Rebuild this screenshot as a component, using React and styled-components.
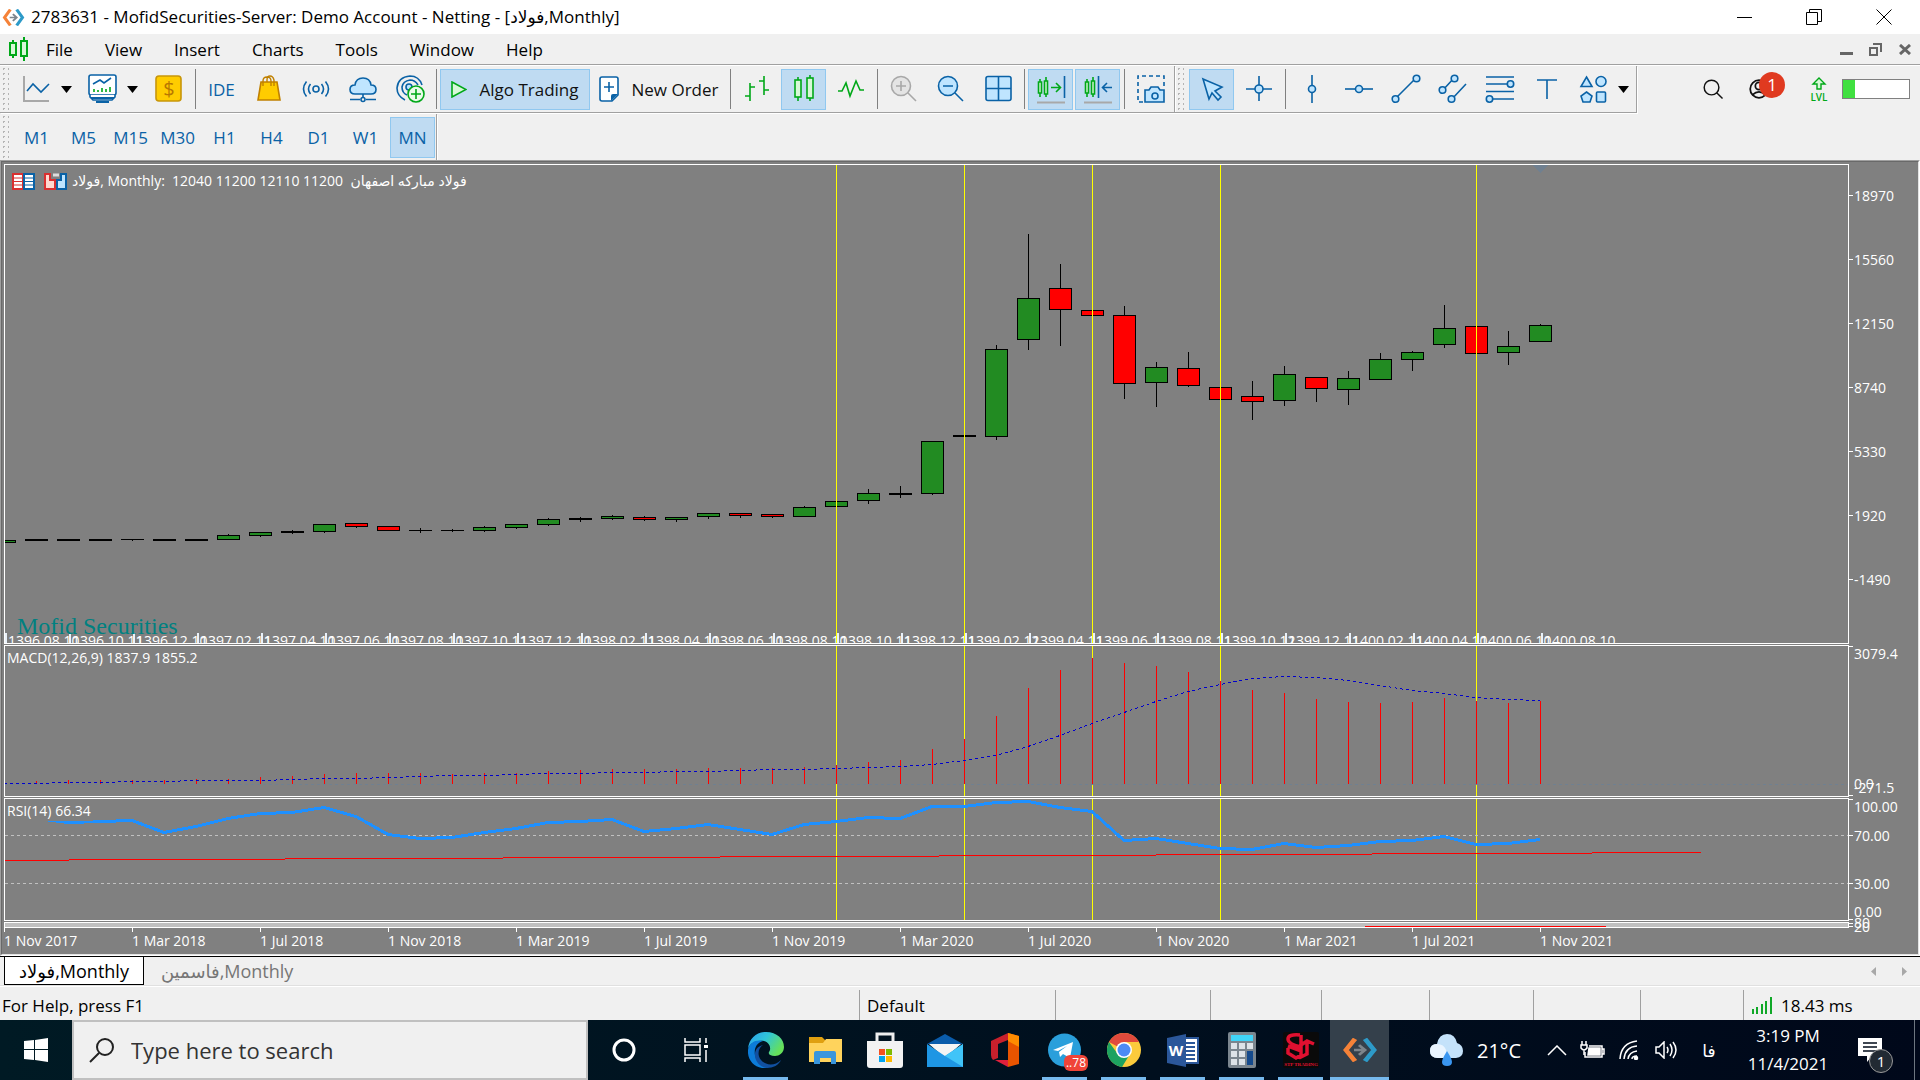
import React, { useState } from 'react';
import styled, { createGlobalStyle, css } from 'styled-components';

const GlobalStyle = createGlobalStyle`
  * {
    box-sizing: border-box;
  }

  body {
    margin: 0;
    background: #f0f0f0;
    color: #000;
    font-family: 'Open Sans', 'Noto Sans', 'DejaVu Sans', sans-serif;
    font-size: 17px;
  }

  button,
  input {
    font: inherit;
    color: inherit;
  }

  svg {
    display: block;
    flex: none;
  }
`;

const BLUE = '#0a62a6';
const SKY = '#bfe5ff';
const GREEN = '#00a818';

/* ---------- shared ---------- */

const PlainButton = styled.button`
  display: flex;
  align-items: center;
  justify-content: center;
  padding: 0;
  border: none;
  background: none;
  white-space: nowrap;
  cursor: pointer;
`;

const Window = styled.div`
  display: flex;
  flex-direction: column;
  min-height: 100vh;
`;

/* ---------- title bar and menu ---------- */

const TitleBar = styled.header`
  display: flex;
  align-items: center;
  height: 34px;
  padding: 0 1px 0 2px;
  background: #fff;
`;

const Title = styled.h1`
  flex: 1;
  margin: 0 0 0 6px;
  font-size: 17px;
  font-weight: 400;
  line-height: 34px;
  white-space: nowrap;
`;

const WindowButton = styled(PlainButton)`
  width: 70px;
  height: 34px;

  &:hover {
    background: #e5e5e5;
  }
`;

const MenuBar = styled.nav`
  display: flex;
  align-items: center;
  height: 31px;
  padding: 0 1px 0 8px;
  border-bottom: 1px solid #a0a0a0;
  box-shadow: 0 1px 0 #fff;
`;

const MenuButton = styled(PlainButton)`
  height: 28px;
  padding: 0 16px;

  &:hover {
    background: #bfdbf2;
  }
`;

const Spacer = styled.div`
  flex: 1;
`;

const MdiButton = styled(PlainButton)`
  width: 29px;
  height: 28px;
`;

/* ---------- toolbars ---------- */

const ToolArea = styled.div`
  display: flex;
  align-items: flex-start;
  margin-top: 1px;
`;

const Toolbar = styled.div`
  display: flex;
  align-items: center;
  height: ${({ $last }) => ($last ? 46 : 47)}px;
  border-right: 1px solid #a0a0a0;
  border-bottom: ${({ $last }) => ($last ? 'none' : '1px solid #a0a0a0')};
  box-shadow: 1px 1px 0 #fff;
`;

const Gripper = styled.div`
  width: 13px;
  height: 46px;
  background-image: radial-gradient(circle, #b4b4b4 1px, transparent 1px);
  background-size: 5px 5px;
  background-position: 1px 0;
  background-clip: content-box;
  padding-right: 4px;
`;

const ToolButton = styled(PlainButton)`
  width: 45px;
  height: 41px;
  margin: 0 1px;
  color: ${BLUE};
  border: 1px solid transparent;

  ${({ $active }) =>
    $active &&
    css`
      background: #bfdbf2;
      border-color: #90c8f0;
    `}

  &:hover {
    border-color: #90c8f0;
  }
`;

const AlgoButton = styled(ToolButton)`
  width: 150px;
  gap: 12px;
  color: #111;
`;

const OrderButton = styled(ToolButton)`
  width: 134px;
  gap: 12px;
  color: #111;
`;

const DropButton = styled(PlainButton)`
  justify-content: flex-start;
  width: 19px;
  height: 41px;
  padding-left: 1px;
`;

const Separator = styled.div`
  width: 2px;
  height: 40px;
  margin: 0 2px;
  border-right: 1px solid #808080;
`;

const StatusTools = styled.div`
  display: flex;
  align-items: center;
  height: 46px;
  padding-right: 10px;
`;

const IconButton = styled(PlainButton)`
  width: 46px;
  height: 41px;
`;

const Badge = styled.span`
  position: absolute;
  top: 3px;
  right: -3px;
  width: 26px;
  height: 26px;
  border-radius: 50%;
  background: #e03a20;
  color: #fff;
  font-size: 17px;
  line-height: 25px;
  text-align: center;
`;

const AccountButton = styled(IconButton)`
  position: relative;
`;

const LevelMark = styled.div`
  display: flex;
  justify-content: center;
  width: 46px;
  margin-left: 14px;
`;

const Level = styled.div`
  width: 68px;
  height: 20px;
  padding-right: 54px;
  border: 1px solid #808080;
  background: #40e040;
  box-shadow: inset -54px 0 0 #fff;
`;

/* ---------- chart window ---------- */

const Sunken = styled.main`
  flex: 1;
  display: flex;
  border: 1px solid;
  border-color: #a0a0a0 #fff #fff #a0a0a0;
`;

const ChartWindow = styled.div`
  flex: 1;
  min-width: 0;
  padding: 2px 0 0 2px;
  border: 1px solid;
  border-color: #696969 #e3e3e3 #e3e3e3 #696969;
  background: #808080;
  color: #fff;
  font-size: 14px;
`;

const Pane = styled.section`
  display: grid;
  grid-template-columns: minmax(0, 1fr) 69px;
  grid-template-rows: minmax(0, 1fr);
  height: ${({ $height }) => $height}px;
  margin-bottom: ${({ $gap }) => $gap || 0}px;
`;

const PlotFrame = styled.div`
  position: relative;
  min-width: 0;
  overflow: hidden;
  border: 1px solid #fff;
  background: ${({ $fill }) => $fill || 'transparent'};
`;

const Canvas = styled.svg`
  width: 100%;
  height: 100%;
  shape-rendering: crispEdges;

  text {
    fill: #fff;
    font-size: 14px;
  }
`;

const AxisCanvas = styled(Canvas)`
  overflow: visible;
`;

const PaneCaption = styled.div`
  position: absolute;
  top: 2px;
  left: 0;
  padding: 0 2px;
  background: #808080;
  line-height: 20px;
  font-size: 14px;
  white-space: pre;
`;

const ChartHeader = styled(PaneCaption)`
  top: 6px;
  left: 7px;
  padding: 0;
  display: flex;
  align-items: center;
  gap: 9px;
`;

const HeaderText = styled.span`
  margin-left: -4px;
`;

const Watermark = styled.div`
  position: absolute;
  left: 12px;
  bottom: 3px;
  color: #008080;
  font-family: 'Liberation Serif', serif;
  font-size: 24px;
  line-height: 28px;
`;

const TimeAxis = styled.ol`
  display: flex;
  height: 26px;
  margin: 0;
  padding: 0;
  list-style: none;
  overflow: hidden;
`;

const TimeLabel = styled.li`
  flex: none;
  width: 128px;
  white-space: nowrap;
  line-height: 18px;
  font-size: 14px;

  &::before {
    content: '';
    display: block;
    width: 1px;
    height: 4px;
    background: #fff;
  }
`;

/* ---------- tabs and status bar ---------- */

const TabBar = styled.div`
  display: flex;
  align-items: flex-start;
  height: 30px;
  padding-left: 4px;
  border-top: 1px solid #000;
  border-bottom: 1px solid #e0e0e0;
  box-shadow: 0 1px 0 #fff;
`;

const Tab = styled(PlainButton)`
  height: 28px;
  padding: 0 17px;
  color: ${({ $active }) => ($active ? '#000' : '#767676')};
  font-size: 18px;

  ${({ $active }) =>
    $active &&
    css`
      padding: 0 14px;
      background: #fff;
      border: 1px solid #000;
      border-top: none;
    `}
`;

const TabScroll = styled(PlainButton)`
  width: 31px;
  height: 28px;
`;

const StatusBar = styled.footer`
  display: flex;
  align-items: stretch;
  height: 34px;
  padding-top: 4px;
`;

const StatusCell = styled.div`
  display: flex;
  align-items: center;
  gap: 8px;
  width: ${({ $width }) => $width}px;
  padding: 0 5px 0 7px;
  border-left: 1px solid #a0a0a0;
  white-space: nowrap;
`;

const StatusMain = styled(StatusCell)`
  flex: 1;
  padding-left: 2px;
  border-left: none;
`;

/* ---------- taskbar ---------- */

const TaskBar = styled.div`
  display: flex;
  height: 60px;
  background: linear-gradient(90deg, #001a24, #000f1e 60%, #00081a);
  color: #fff;
`;

const StartButton = styled(PlainButton)`
  width: 72px;
`;

const SearchBox = styled.label`
  display: flex;
  align-items: center;
  gap: 15px;
  width: 516px;
  padding-left: 15px;
  border: 2px solid #c0c0c0;
  background: #f0f0f0;
  color: #222;
`;

const SearchInput = styled.input`
  flex: 1;
  min-width: 0;
  border: none;
  outline: none;
  background: transparent;
  font-size: 22px;

  &::placeholder {
    color: #333;
    opacity: 1;
  }
`;

const TaskIcon = styled(PlainButton)`
  width: ${({ $width }) => $width}px;
  height: 60px;
`;

const AppList = styled.div`
  display: flex;
  flex: 1;
  margin-left: 4px;
`;

const AppButton = styled(PlainButton)`
  position: relative;
  width: ${({ $running }) => ($running ? 59 : 60)}px;
  height: 60px;
  background: ${({ $active }) => ($active ? '#34404b' : 'none')};

  &::after {
    content: '';
    position: absolute;
    bottom: 0;
    left: ${({ $active }) => ($active ? 0 : 7)}px;
    right: ${({ $active }) => ($active ? 0 : 7)}px;
    height: 3px;
    background: ${({ $running }) => ($running ? '#76b9ed' : 'transparent')};
  }
`;

const CountBadge = styled.span`
  position: absolute;
  right: 6px;
  bottom: 9px;
  padding: 0 2px;
  border-radius: 6px;
  background: #f04438;
  font-size: 12px;
  line-height: 16px;
`;

const Weather = styled(PlainButton)`
  width: 120px;
  gap: 14px;
  justify-content: flex-start;
  padding-left: 10px;
  font-size: 20px;
`;

const Clock = styled.div`
  display: flex;
  flex-direction: column;
  justify-content: center;
  width: 108px;
  text-align: center;
  font-size: 17px;
  line-height: 28px;
`;

const NoticeButton = styled(TaskIcon)`
  position: relative;
  padding-right: 16px;
`;

const NoticeCount = styled.span`
  position: absolute;
  left: 27px;
  top: 29px;
  width: 24px;
  height: 24px;
  border: 1px solid #999;
  border-radius: 50%;
  background: #222a33;
  font-size: 15px;
  line-height: 22px;
`;

const ShowDesktop = styled(PlainButton)`
  width: 6px;
  border-left: 1px solid #6d7680;
`;

/* ---------- toolbar icons ---------- */

const Icon = ({ children, size = 30, ...rest }) => (
  <svg width={size} height={size} viewBox="0 0 30 30" fill="none" stroke={BLUE} strokeWidth="1.6" aria-hidden="true" {...rest}>
    {children}
  </svg>
);

const Caret = () => (
  <svg width="11" height="7" viewBox="0 0 11 7" aria-hidden="true">
    <path d="M0 0h11L5.5 7z" fill="#000" />
  </svg>
);

const icons = {
  lineStudy: (
    <Icon>
      <path d="M2 2v25h25" stroke="#a8a8a8" strokeWidth="2" />
      <path d="M5 17l6-7 8 8 8-8" />
    </Icon>
  ),
  monitor: (
    <Icon>
      <rect x="1" y="1" width="27" height="20" rx="2" fill="#fff" />
      <path d="M2 21v2l3 3h19l3-3v-2" fill="#fff" />
      <path d="M3 24h23M8 28h13" strokeWidth="2" />
      <path d="M5 10l7-4 4 3 7-5" />
      <path d="M6 18v-3M10 18v-2M14 18v-4M18 18v-3M22 18v-5" stroke={GREEN} />
    </Icon>
  ),
  dollar: (
    <Icon>
      <rect x="2" y="2" width="25" height="25" rx="3" fill="#fc0" stroke="#c8960a" />
      <text x="15" y="22" textAnchor="middle" fontSize="20" fill="#b87800" stroke="none">$</text>
    </Icon>
  ),
  bag: (
    <Icon stroke="#c08000">
      <path d="M7 8h16l3 18H4z" fill="#fc0" />
      <path d="M9 12V7q0-4 4-4t4 4v5M13 8V6q0-4 3-4t4 4v6" strokeWidth="1.4" />
    </Icon>
  ),
  signal: (
    <Icon>
      <circle cx="15" cy="15" r="3" />
      <path d="M9.5 10q-4 5 0 10M20.5 10q4 5 0 10M5.5 7.5q-6 7.5 0 15M24.5 7.5q6 7.5 0 15" />
    </Icon>
  ),
  cloud: (
    <Icon>
      <path d="M7 20q-5 0-5-4.5T7 11q1-7 8-7t8 7q5 0 5 4.5T23 20z" fill={SKY} />
      <path d="M15 20v4M2 25.5h10M18 25.5h10" />
      <circle cx="15" cy="25.5" r="2" />
    </Icon>
  ),
  vps: (
    <Icon>
      <path d="M10 26Q2 22 2 14 3 3 15 2q9 0 12 9M12 21q-5-2-5-8 1-6 8-7 5 0 8 5" />
      <circle cx="14" cy="13" r="3" fill={SKY} />
      <circle cx="21" cy="20" r="8" fill="#eafbea" stroke={GREEN} />
      <path d="M21 15v10M16 20h10" stroke={GREEN} />
    </Icon>
  ),
  bars: (
    <Icon stroke={GREEN}>
      <path d="M8 9v18M3 22h5M8 13h5M22 2v19M17 7h5M22 16h5" />
    </Icon>
  ),
  candles: (
    <Icon stroke={GREEN}>
      <path d="M9 3v24M21 1v26" />
      <rect x="6" y="6" width="6" height="17" fill="#d8f8d8" />
      <rect x="18" y="4" width="6" height="20" fill="#d8f8d8" />
    </Icon>
  ),
  zigzag: (
    <Icon stroke={GREEN}>
      <path d="M2 17h4l4-8 4 13 6-15 4 9h4" />
    </Icon>
  ),
  zoomIn: (
    <Icon stroke="#a8a8a8">
      <circle cx="12" cy="12" r="9.5" fill="#e4e4e4" />
      <path d="M12 7v10M7 12h10M19 19l8 8" />
    </Icon>
  ),
  zoomOut: (
    <Icon>
      <circle cx="12" cy="12" r="9.5" fill={SKY} />
      <path d="M7 12h10M19 19l8 8" />
    </Icon>
  ),
  tile: (
    <Icon>
      <rect x="3" y="2.5" width="25" height="24" rx="2" fill={SKY} />
      <path d="M3 14.5h25M15.5 2.5v24" />
    </Icon>
  ),
  autoScroll: (
    <Icon>
      <path d="M4 5v18M10 3v20" stroke={GREEN} />
      <path d="M2.5 8h3v11h-3zM8.5 7h3v13h-3z" stroke={GREEN} fill="#d8f8d8" />
      <path d="M15 13.5h9M20 9l4.5 4.5L20 18" stroke={GREEN} />
      <path d="M28.5 2v22" />
      <path d="M1 28.5h28" stroke="#a8a8a8" strokeWidth="2" />
    </Icon>
  ),
  shift: (
    <Icon>
      <path d="M4 5v18M10 3v20" stroke={GREEN} />
      <path d="M2.5 8h3v11h-3zM8.5 7h3v13h-3z" stroke={GREEN} fill="#d8f8d8" />
      <path d="M29 13.5h-9M24 9l-4.5 4.5L24 18" />
      <path d="M15.5 2v22" />
      <path d="M1 28.5h28" stroke="#a8a8a8" strokeWidth="2" />
    </Icon>
  ),
  camera: (
    <Icon>
      <path d="M7 28H2V2h26v13" strokeDasharray="4 3" />
      <path d="M9 16h4l2-3h7l2 3h4v12H9z" fill={SKY} />
      <circle cx="19" cy="22" r="3" />
    </Icon>
  ),
  cursor: (
    <Icon>
      <path d="M6 5l19 8-7 4 6 6-3 3-6-7-3 6z" fill={SKY} />
    </Icon>
  ),
  cross: (
    <Icon>
      <path d="M15 2v25M2 15h26" />
      <circle cx="15" cy="15" r="4" fill={SKY} />
    </Icon>
  ),
  vline: (
    <Icon>
      <path d="M15 1v28" />
      <circle cx="15" cy="15" r="3.5" fill={SKY} />
    </Icon>
  ),
  hline: (
    <Icon>
      <path d="M1 15h28" />
      <circle cx="15" cy="15" r="3.5" fill={SKY} />
    </Icon>
  ),
  trend: (
    <Icon>
      <path d="M4 25L25 4" />
      <circle cx="4.5" cy="25" r="3.3" fill={SKY} />
      <circle cx="25.5" cy="4.5" r="3.3" fill={SKY} />
    </Icon>
  ),
  channel: (
    <Icon>
      <path d="M5 16L16 4M14 25l14-15" />
      <circle cx="4.5" cy="16" r="3.3" fill={SKY} />
      <circle cx="16.5" cy="4.5" r="3.3" fill={SKY} />
      <circle cx="13.5" cy="25" r="3.3" fill={SKY} />
    </Icon>
  ),
  fibo: (
    <Icon>
      <path d="M1 3h28M1 10h22M1 17.5h28M6 25h23" />
      <circle cx="25.5" cy="10" r="3.2" fill={SKY} />
      <circle cx="4.5" cy="25" r="3.2" fill={SKY} />
    </Icon>
  ),
  text: (
    <Icon>
      <path d="M5 6h20M15 6v19" />
    </Icon>
  ),
  shapes: (
    <Icon fill={SKY}>
      <path d="M7.5 3l5.5 9.5H2zM7.5 18l5.5 4-2 6H4l-2-6z" />
      <circle cx="22" cy="7.5" r="5" />
      <rect x="17.5" y="18" width="9" height="10" rx="1" />
    </Icon>
  ),
};

const TIMEFRAMES = ['M1', 'M5', 'M15', 'M30', 'H1', 'H4', 'D1', 'W1', 'MN'];

/* ---------- chart data ---------- */

const STEP = 32;
const xAt = (i) => i * STEP - 1;

// open/close edges then high/low, in pane pixels; color: g, r or k (flat)
const CANDLES = [
  [375, 377, 375, 377, 'g'], [374, 375, 374, 375, 'k'], [374, 375, 374, 375, 'k'], [374, 375, 374, 375, 'k'],
  [374, 374, 374, 375, 'k'], [374, 375, 374, 375, 'k'], [374, 375, 374, 375, 'k'], [370, 374, 369, 374, 'g'],
  [367, 370, 367, 371, 'g'], [366, 367, 365, 368, 'k'], [359, 366, 359, 367, 'g'], [358, 361, 358, 362, 'r'],
  [361, 365, 361, 365, 'r'], [365, 365, 363, 367, 'k'], [365, 365, 364, 366, 'k'], [362, 365, 361, 366, 'g'],
  [359, 362, 359, 363, 'g'], [354, 359, 353, 360, 'g'], [353, 354, 352, 356, 'k'], [351, 353, 350, 354, 'g'],
  [352, 354, 351, 355, 'r'], [352, 354, 352, 356, 'g'], [348, 351, 348, 353, 'g'], [348, 350, 348, 352, 'r'],
  [349, 351, 349, 352, 'r'], [342, 351, 341, 351, 'g'], [336, 341, 336, 341, 'g'], [328, 335, 324, 338, 'g'],
  [328, 329, 321, 332, 'k'], [276, 328, 276, 329, 'g'], [270, 271, 270, 271, 'k'], [184, 271, 180, 274, 'g'],
  [133, 174, 69, 184, 'g'], [123, 144, 99, 180, 'r'], [145, 150, 145, 150, 'r'], [150, 218, 141, 233, 'r'],
  [202, 217, 197, 241, 'g'], [203, 220, 187, 221, 'r'], [222, 234, 222, 234, 'r'], [231, 236, 216, 254, 'r'],
  [209, 235, 201, 240, 'g'], [212, 223, 212, 236, 'r'], [213, 224, 206, 239, 'g'], [194, 214, 188, 214, 'g'],
  [187, 194, 186, 205, 'g'], [163, 179, 140, 182, 'g'], [161, 188, 161, 188, 'r'], [181, 187, 166, 199, 'g'],
  [160, 176, 159, 176, 'g'],
];

const FILLS = { g: '#228b22', r: '#f00', k: '#000' };

const VERTICALS = [26, 30, 34, 38, 46];

const JALALI = [
  '1396.08.10', '1396.10.11', '1396.12.10', '1397.02.11', '1397.04.10', '1397.06.10', '1397.08.10', '1397.10.11',
  '1397.12.10', '1398.02.11', '1398.04.10', '1398.06.10', '1398.08.10', '1398.10.11', '1398.12.11', '1399.02.12',
  '1399.04.11', '1399.06.11', '1399.08.11', '1399.10.12', '1399.12.11', '1400.02.11', '1400.04.10', '1400.06.10',
  '1400.08.10',
];

const MACD_TOP = 646;
const MACD_BARS = [
  783, 781, 780, 780, 780, 780, 779, 779, 777, 776, 774, 773, 773, 773, 774, 773, 773, 771, 770, 769, 769, 769, 768,
  768, 768, 767, 765, 762, 760, 749, 739, 716, 688, 670, 658, 663, 666, 672, 681, 690, 693, 699, 702, 703, 702, 698,
  701, 703, 701,
];
const MACD_SIGNAL = [
  783, 783, 782, 782, 781, 781, 780, 780, 780, 779, 778, 778, 777, 776, 775, 775, 774, 773, 773, 772, 772, 771, 771,
  770, 769, 769, 768, 767, 766, 764, 760, 755, 746, 735, 723, 712, 701, 691, 684, 678, 676, 677, 680, 685, 690, 693,
  697, 699, 700,
];

const RSI_TOP = 799;
const RSI = [
  816, 818, 822, 821, 820, 832, 826, 818, 813, 812, 807, 816, 834, 838, 837, 832, 828, 822, 821, 819, 831, 828, 824,
  829, 834, 824, 821, 817, 818, 806, 806, 802, 801, 807, 811, 840, 838, 843, 848, 849, 843, 847, 845, 841, 840, 836,
  844, 843, 839,
];

const DATES = [
  '1 Nov 2017', '1 Mar 2018', '1 Jul 2018', '1 Nov 2018', '1 Mar 2019', '1 Jul 2019', '1 Nov 2019', '1 Mar 2020',
  '1 Jul 2020', '1 Nov 2020', '1 Mar 2021', '1 Jul 2021', '1 Nov 2021',
];

// half a pixel down keeps one-pixel strokes on a single row
const toPoints = (values, top) => values.map((v, i) => `${xAt(i)},${v - top + 0.5}`).join(' ');

const Verticals = () =>
  VERTICALS.map((i) => <rect key={i} x={xAt(i)} y="0" width="1" height="100%" fill="#ff0" />);

const Axis = ({ labels, ticks }) => (
  <AxisCanvas>
    {ticks.map((y) => (
      <rect key={y} x="0" y={y} width="4" height="1" fill="#fff" />
    ))}
    {labels.map(([label, y]) => (
      <text key={label} x="5" y={y}>{label}</text>
    ))}
  </AxisCanvas>
);

const PricePlot = () => (
  <Canvas>
    {CANDLES.map(([top, bottom, high, low, color], i) => (
      <g key={i}>
        <rect x={xAt(i)} y={high} width="1" height={low - high + 1} fill="#000" />
        <rect x={xAt(i) - 11} y={top} width="23" height={bottom - top + 1} fill="#000" />
        {color !== 'k' && (
          <rect x={xAt(i) - 10} y={top + 1} width="21" height={bottom - top - 1} fill={FILLS[color]} />
        )}
      </g>
    ))}
    {JALALI.map((label, i) => (
      <g key={label}>
        <rect x={i * 64} y="468" width="2" height="10" fill="#eaf2fa" />
        <text x={i * 64 + 3} y="481">{label}</text>
      </g>
    ))}
    <Verticals />
    <path d="M1527 0h16l-8 8z" fill="#708090" />
  </Canvas>
);

const MacdPlot = () => (
  <Canvas>
    <Verticals />
    <path d="M0 138.5H1843" stroke="#708090" strokeDasharray="3 3" />
    {MACD_BARS.map((y, i) => (
      <rect key={i} x={xAt(i)} y={y - MACD_TOP} width="1" height={784 - y} fill="#f00" />
    ))}
    <polyline points={toPoints(MACD_SIGNAL, MACD_TOP)} fill="none" stroke="#0000cd" strokeDasharray="3 3" />
  </Canvas>
);

const RsiPlot = () => (
  <Canvas>
    <Verticals />
    <path d="M0 36.5H1843M0 84.5H1843" stroke="#c0c0c0" strokeDasharray="3 3" />
    <polyline points={toPoints(RSI, RSI_TOP)} fill="none" stroke="#1e90ff" strokeWidth="3" />
    <path d="M0 61.3L1696 53.5" stroke="#f00" />
  </Canvas>
);

const Chart = () => (
  <ChartWindow>
    <Pane $height={480} $gap={1}>
      <PlotFrame>
        <PricePlot />
        <ChartHeader>
          <svg width="23" height="17" viewBox="0 0 23 17" aria-hidden="true">
            <rect x="1" y="1" width="10" height="15" fill="#fff" stroke="#d83030" strokeWidth="2" />
            <rect x="12" y="1" width="10" height="15" fill="#fff" stroke={BLUE} strokeWidth="2" />
            <path d="M2 5h8M2 8.5h8M2 12h8" stroke="#d83030" />
            <path d="M13 5h8M13 8.5h8M13 12h8" stroke={BLUE} />
          </svg>
          <svg width="23" height="17" viewBox="0 0 23 17" aria-hidden="true">
            <path d="M1 1h5v6h5v9H1z" fill="#ffd8d0" stroke="#d83030" strokeWidth="2" />
            <path d="M22 1h-5v6h-4v9h9z" fill={SKY} stroke={BLUE} strokeWidth="2" />
            <path d="M9 2h6" stroke="#ddd" strokeWidth="3" />
          </svg>
          <HeaderText>
            <bdi>فولاد</bdi>{', Monthly:  12040 11200 12110 11200  '}<bdi>فولاد مبارکه اصفهان</bdi>
          </HeaderText>
        </ChartHeader>
        <Watermark>Mofid Securities</Watermark>
      </PlotFrame>
      <Axis
        ticks={[31, 95, 159, 223, 287, 351, 415]}
        labels={[['18970', 37], ['15560', 101], ['12150', 165], ['8740', 229], ['5330', 293], ['1920', 357], ['-1490', 421]]}
      />
    </Pane>
    <Pane $height={152} $gap={1}>
      <PlotFrame>
        <MacdPlot />
        <PaneCaption>MACD(12,26,9) 1837.9 1855.2</PaneCaption>
      </PlotFrame>
      <Axis ticks={[1, 150]} labels={[['3079.4', 14], ['0.0', 144], ['-271.5', 148]]} />
    </Pane>
    <Pane $height={123} $gap={1}>
      <PlotFrame>
        <RsiPlot />
        <PaneCaption>RSI(14) 66.34</PaneCaption>
      </PlotFrame>
      <Axis ticks={[1, 37, 85, 121]} labels={[['100.00', 14], ['70.00', 43], ['30.00', 91], ['0.00', 119]]} />
    </Pane>
    <Pane $height={6}>
      <PlotFrame $fill="#c0c0c0">
        <Canvas>
          <rect x="1360" y="3" width="241" height="1" fill="#f00" />
        </Canvas>
      </PlotFrame>
      <Axis ticks={[1, 4]} labels={[['80', 6], ['20', 10]]} />
    </Pane>
    <TimeAxis>
      {DATES.map((date) => (
        <TimeLabel key={date}>{date}</TimeLabel>
      ))}
    </TimeAxis>
  </ChartWindow>
);

/* ---------- logos ---------- */

const BrokerLogo = ({ width, height }) => (
  <svg width={width} height={height} viewBox="0 0 36 30" preserveAspectRatio="none" fill="none" strokeWidth="5" aria-hidden="true">
    <path d="M13 1L4 15l9 14" stroke="#f58238" />
    <path d="M23 1l9 14-9 14" stroke="#2d9ac8" />
    <path d="M12 15h10M17 9l6 6-6 6" stroke="#7d858c" strokeWidth="3" />
  </svg>
);

const EdgeLogo = () => (
  <svg width="36" height="36" viewBox="0 0 36 36" aria-hidden="true">
    <defs>
      <linearGradient id="edgeTop" x1="0" x2="1" y1="0" y2="0.5">
        <stop offset="0" stopColor="#2a9df0" />
        <stop offset="0.5" stopColor="#30c6d8" />
        <stop offset="1" stopColor="#66e05a" />
      </linearGradient>
    </defs>
    <path d="M0 17C1 6 9 0 18 0c11 0 18 7 18 15 0 6-5 9-9 9-5 0-7-2-6-4 2-2 2-9-5-11C8 8 2 11 0 17z" fill="url(#edgeTop)" />
    <path d="M0 18C1 10 9 7 15 9c-7 2-9 8-8 14 2 8 8 12 14 13C8 38-1 29 0 18z" fill="#0c7cd8" />
    <path d="M15 13c-5 3-6 10-2 15 5 6 14 6 20 0-2 5-8 8-14 8-8-1-13-8-12-15 1-5 4-7 8-8z" fill="#1150a0" />
  </svg>
);

const ExplorerLogo = () => (
  <svg width="33" height="27" viewBox="0 0 33 27" aria-hidden="true">
    <path d="M0 0h13l3 3v6H0z" fill="#e0a010" />
    <path d="M0 6h14l3-4h16v23H0z" fill="#ffd35c" />
    <path d="M5 27V16q0-2 2-2h18q2 0 2 2v11h-5v-6H11v6z" fill="#3a96dd" />
  </svg>
);

const StoreLogo = () => (
  <svg width="36" height="36" viewBox="0 0 36 36" aria-hidden="true">
    <path d="M10 11V2h16v9" fill="none" stroke="#eee" strokeWidth="3" />
    <path d="M0 9h36v24q0 3-3 3H3q-3 0-3-3z" fill="#f2f2f2" />
    <path d="M12 17h6v6h-6z" fill="#f25022" />
    <path d="M19 17h6v6h-6z" fill="#7fba00" />
    <path d="M12 24h6v6h-6z" fill="#00a4ef" />
    <path d="M19 24h6v6h-6z" fill="#ffb900" />
  </svg>
);

const MailLogo = () => (
  <svg width="36" height="33" viewBox="0 0 36 33" aria-hidden="true">
    <path d="M0 10L18 0l18 10z" fill="#0a5cab" />
    <path d="M2 10h32L18 24z" fill="#f4f4f4" />
    <path d="M0 10l18 12 18-12v23H0z" fill="#1e96e4" />
    <path d="M36 10L18 22l18 11z" fill="#40c4f8" />
  </svg>
);

const OfficeLogo = () => (
  <svg width="28" height="34" viewBox="0 0 28 34" aria-hidden="true">
    <path d="M0 8L17 0v7L7 11v14l-5 2q-2-2-2-5z" fill="#c8202c" />
    <path d="M17 0l11 3v28l-11 3V7z" fill="#e85400" />
    <path d="M17 0l11 3v11l-11-6z" fill="#ff8c00" />
    <path d="M4 27h13v7z" fill="#e0203c" />
  </svg>
);

const TelegramLogo = () => (
  <svg width="33" height="36" viewBox="0 0 33 36" aria-hidden="true">
    <circle cx="16.5" cy="18" r="16.5" fill="#2a9fdb" />
    <path d="M5 18l20-8-3 16-7-4-3 3-1-5 8-6-9 5z" fill="#fff" />
  </svg>
);

const ChromeLogo = () => (
  <svg width="34" height="34" viewBox="0 0 34 34" aria-hidden="true">
    <circle cx="17" cy="17" r="17" fill="#fbcb3c" />
    <path d="M17 17L2 9A17 17 0 0 1 32 9H17z" fill="#e04a3c" />
    <path d="M2 9A17 17 0 0 0 15 34l8-13-6-2-7 1z" fill="#1da260" />
    <circle cx="17" cy="17" r="8" fill="#fff" />
    <circle cx="17" cy="17" r="6.5" fill="#4c8bf5" />
  </svg>
);

const WordLogo = () => (
  <svg width="32" height="33" viewBox="0 0 32 33" aria-hidden="true">
    <rect x="17" y="4" width="14" height="25" fill="#fff" stroke="#2b579a" strokeWidth="2" />
    <path d="M19 9h9M19 13h9M19 17h9M19 21h9M19 25h9" stroke="#2b579a" strokeWidth="2" />
    <path d="M0 4l19-4v33L0 29z" fill="#2b579a" />
    <text x="9" y="22" textAnchor="middle" fontSize="15" fontWeight="700" fill="#fff">W</text>
  </svg>
);

const CalcLogo = () => (
  <svg width="28" height="36" viewBox="0 0 28 36" aria-hidden="true">
    <rect width="28" height="36" rx="2" fill="#7b868f" />
    <rect x="3" y="3" width="22" height="6" fill="#40d4f8" />
    <path d="M3 11h6v6H3zM11 11h6v6h-6zM19 11h6v6h-6zM3 19h6v6H3zM11 19h6v6h-6zM3 27h6v6H3zM11 27h6v6h-6z" fill="#dde3e8" />
    <path d="M19 19h6v14h-6z" fill="#154a8c" />
  </svg>
);

const StpLogo = () => (
  <svg width="36" height="36" viewBox="0 0 36 36" aria-hidden="true">
    <rect width="36" height="36" rx="2" fill="#0a0a0a" />
    <path d="M17 3Q5 2 5 7t13 8v4L5 14M5 16v5l8 5 5-3v-5M18 3v10l6-4 7 3M24 8v14l-8 4" fill="none" stroke="#e01030" strokeWidth="3.5" />
    <text x="18" y="34" textAnchor="middle" fontFamily="Liberation Serif, serif" fontSize="5" fontWeight="700" fill="#e01030">STP TRADING</text>
  </svg>
);

const APPS = [
  { name: 'Microsoft Edge', logo: <EdgeLogo />, running: true },
  { name: 'File Explorer', logo: <ExplorerLogo /> },
  { name: 'Microsoft Store', logo: <StoreLogo /> },
  { name: 'Mail', logo: <MailLogo /> },
  { name: 'Office', logo: <OfficeLogo /> },
  { name: 'Telegram', logo: <TelegramLogo />, running: true, count: '..78' },
  { name: 'Chrome', logo: <ChromeLogo />, running: true },
  { name: 'Word', logo: <WordLogo />, running: true },
  { name: 'Calculator', logo: <CalcLogo />, running: true },
  { name: 'STP Trading', logo: <StpLogo />, running: true },
  { name: 'MetaTrader', logo: <BrokerLogo width={36} height={24} />, running: true, active: true },
];

/* ---------- page sections ---------- */

const Tool = ({ name, label, active }) => (
  <ToolButton type="button" aria-label={label || name} $active={active}>
    {icons[name]}
  </ToolButton>
);

const Drop = () => (
  <DropButton type="button" aria-label="More">
    <Caret />
  </DropButton>
);

const MainToolbar = () => (
  <ToolArea>
    <Toolbar>
      <Gripper />
      <Tool name="lineStudy" />
      <Drop />
      <Tool name="monitor" />
      <Drop />
      <Tool name="dollar" />
      <Separator />
      <ToolButton type="button">IDE</ToolButton>
      <Tool name="bag" />
      <Tool name="signal" />
      <Tool name="cloud" />
      <Tool name="vps" />
      <Separator />
      <AlgoButton type="button" $active>
        <svg width="16" height="17" viewBox="0 0 16 17" aria-hidden="true">
          <path d="M1 1l14 7.5L1 16z" fill="#d8f8d8" stroke={GREEN} strokeWidth="1.6" />
        </svg>
        Algo Trading
      </AlgoButton>
      <OrderButton type="button">
        <svg width="20" height="26" viewBox="0 0 20 26" aria-hidden="true">
          <path d="M3 1h14q2 0 2 2v16l-6 6H3q-2 0-2-2V3q0-2 2-2z" fill="#fff" stroke={BLUE} strokeWidth="1.6" />
          <path d="M19 18l-7 7v-5q0-2 2-2z" fill={BLUE} />
          <path d="M10 6v10M5 11h10" stroke={BLUE} strokeWidth="1.6" />
        </svg>
        New Order
      </OrderButton>
      <Separator />
      <Tool name="bars" />
      <Tool name="candles" active />
      <Tool name="zigzag" />
      <Separator />
      <Tool name="zoomIn" />
      <Tool name="zoomOut" />
      <Tool name="tile" />
      <Separator />
      <Tool name="autoScroll" active />
      <Tool name="shift" active />
      <Separator />
      <Tool name="camera" />
    </Toolbar>
    <Toolbar>
      <Gripper />
      <Tool name="cursor" active />
      <Tool name="cross" />
      <Separator />
      <Tool name="vline" />
      <Tool name="hline" />
      <Tool name="trend" />
      <Tool name="channel" />
      <Tool name="fibo" />
      <Tool name="text" />
      <Tool name="shapes" />
      <Drop />
    </Toolbar>
    <Spacer />
    <StatusTools>
      <IconButton type="button" aria-label="Search">
        <Icon size={22} stroke="#111" strokeWidth="2">
          <circle cx="13" cy="13" r="10" />
          <path d="M20 20l8 8" />
        </Icon>
      </IconButton>
      <AccountButton type="button" aria-label="Account">
        <Icon size={22} stroke="#111" strokeWidth="2.4">
          <circle cx="15" cy="15" r="12" />
          <circle cx="15" cy="11" r="5" />
          <path d="M6 23q9-8 18 0" />
        </Icon>
        <Badge>1</Badge>
      </AccountButton>
      <LevelMark>
        <svg width="20" height="25" viewBox="0 0 20 25" aria-hidden="true">
          <path d="M10 1l6 6h-4v5H8V7H4z" fill="#d8f8d8" stroke={GREEN} strokeWidth="1.4" />
          <text x="10" y="24" textAnchor="middle" fontSize="10" fontWeight="600" fill={GREEN}>LVL</text>
        </svg>
      </LevelMark>
      <Level />
    </StatusTools>
  </ToolArea>
);

const TimeframeBar = () => {
  const [frame, setFrame] = useState('MN');

  return (
    <ToolArea>
      <Toolbar $last>
        <Gripper />
        {TIMEFRAMES.map((item) => (
          <ToolButton key={item} type="button" $active={item === frame} onClick={() => setFrame(item)}>
            {item}
          </ToolButton>
        ))}
      </Toolbar>
    </ToolArea>
  );
};

const MENU = ['File', 'View', 'Insert', 'Charts', 'Tools', 'Window', 'Help'];

const App = () => {
  return (
    <>
      <GlobalStyle />
      <Window>
        <TitleBar>
          <BrokerLogo width={23} height={17} />
          <Title>
            2783631 - MofidSecurities-Server: Demo Account - Netting - [<bdi>فولاد</bdi>,Monthly]
          </Title>
          <WindowButton type="button" aria-label="Minimize">
            <svg width="15" height="15" viewBox="0 0 15 15" aria-hidden="true">
              <path d="M0 7h15v1H0z" />
            </svg>
          </WindowButton>
          <WindowButton type="button" aria-label="Restore">
            <svg width="16" height="16" viewBox="0 0 16 16" fill="none" stroke="#000" aria-hidden="true">
              <path d="M.5 3.5h11v12H.5zM3.5 3.5v-3h12v12h-4" />
            </svg>
          </WindowButton>
          <WindowButton type="button" aria-label="Close">
            <svg width="16" height="16" viewBox="0 0 16 16" stroke="#000" aria-hidden="true">
              <path d="M.5.5l15 15M15.5.5l-15 15" />
            </svg>
          </WindowButton>
        </TitleBar>

        <MenuBar>
          <svg width="22" height="24" viewBox="0 0 22 24" fill="#d8f8d8" stroke={GREEN} strokeWidth="2" aria-hidden="true">
            <path d="M5 3v18M16 0v24" />
            <path d="M2 6h6v12H2zM13 4h6v15h-6z" />
          </svg>
          {MENU.map((item) => (
            <MenuButton key={item} type="button">{item}</MenuButton>
          ))}
          <Spacer />
          <MdiButton type="button" aria-label="Minimize chart">
            <svg width="13" height="13" viewBox="0 0 13 13" aria-hidden="true">
              <path d="M0 9h13v3H0z" fill="#666" />
            </svg>
          </MdiButton>
          <MdiButton type="button" aria-label="Restore chart">
            <svg width="13" height="13" viewBox="0 0 13 13" fill="none" stroke="#666" strokeWidth="2" aria-hidden="true">
              <path d="M1 5h7v7H1zM4 1h8v8" />
            </svg>
          </MdiButton>
          <MdiButton type="button" aria-label="Close chart">
            <svg width="12" height="11" viewBox="0 0 12 11" stroke="#666" strokeWidth="3" aria-hidden="true">
              <path d="M1 1l10 9M11 1L1 10" />
            </svg>
          </MdiButton>
        </MenuBar>

        <MainToolbar />
        <TimeframeBar />

        <Sunken>
          <Chart />
        </Sunken>

        <TabBar>
          <Tab type="button" $active><bdi>فولاد</bdi>,Monthly</Tab>
          <Tab type="button"><bdi>فاسمین</bdi>,Monthly</Tab>
          <Spacer />
          <TabScroll type="button" aria-label="Previous tab">
            <svg width="5" height="9" viewBox="0 0 5 9" aria-hidden="true"><path d="M5 0v9L0 4.5z" fill="#a8a8a8" /></svg>
          </TabScroll>
          <TabScroll type="button" aria-label="Next tab">
            <svg width="5" height="9" viewBox="0 0 5 9" aria-hidden="true"><path d="M0 0v9l5-4.5z" fill="#a8a8a8" /></svg>
          </TabScroll>
        </TabBar>

        <StatusBar>
          <StatusMain>For Help, press F1</StatusMain>
          <StatusCell $width={196}>Default</StatusCell>
          <StatusCell $width={155} />
          <StatusCell $width={111} />
          <StatusCell $width={108} />
          <StatusCell $width={104} />
          <StatusCell $width={107} />
          <StatusCell $width={103} />
          <StatusCell $width={177}>
            <svg width="22" height="17" viewBox="0 0 22 17" fill="#10a828" aria-hidden="true">
              <path d="M1 12h2v5H1zM5 10h2v7H5zM10 7h2v10h-2zM14 4h2v13h-2zM19 0h2v17h-2z" />
            </svg>
            18.43 ms
          </StatusCell>
        </StatusBar>

        <TaskBar>
          <StartButton type="button" aria-label="Start">
            <svg width="24" height="24" viewBox="0 0 24 24" fill="#fff" aria-hidden="true">
              <path d="M0 3l10-1v9H0zM11 2l13-2v11H11zM0 12h10v10L0 21zM11 12h13v12l-13-2z" />
            </svg>
          </StartButton>
          <SearchBox>
            <svg width="25" height="25" viewBox="0 0 25 25" fill="none" stroke="#222" strokeWidth="2" aria-hidden="true">
              <circle cx="16" cy="9" r="8" />
              <path d="M10 15l-9 9" />
            </svg>
            <SearchInput type="text" placeholder="Type here to search" />
          </SearchBox>
          <TaskIcon type="button" $width={72} aria-label="Cortana">
            <svg width="24" height="24" viewBox="0 0 24 24" aria-hidden="true">
              <circle cx="12" cy="12" r="10" fill="none" stroke="#fff" strokeWidth="3" />
            </svg>
          </TaskIcon>
          <TaskIcon type="button" $width={72} aria-label="Task view">
            <svg width="25" height="24" viewBox="0 0 25 24" fill="none" stroke="#fff" strokeWidth="1.5" aria-hidden="true">
              <path d="M1 0v4h15V0M1 7h15v10H1zM1 24v-4h15v4M22 0v5M22 12v12" />
              <path d="M22 7v3" strokeWidth="4" />
            </svg>
          </TaskIcon>
          <AppList>
            {APPS.map(({ name, logo, running, active, count }) => (
              <AppButton key={name} type="button" aria-label={name} $running={running} $active={active}>
                {logo}
                {count && <CountBadge>{count}</CountBadge>}
              </AppButton>
            ))}
          </AppList>
          <Weather type="button">
            <svg width="33" height="32" viewBox="0 0 33 32" aria-hidden="true">
              <path d="M8 24q-8 0-8-7t7-7Q9 0 17 0t10 9q6 2 6 8t-7 7z" fill="#c4e2fa" />
              <path d="M8 24q-8 0-8-7t7-7q7 0 9 6t-2 8z" fill="#eaf5ff" />
              <path d="M17 17q5 8 5 11 0 4-5 4t-5-4q0-3 5-11z" fill="#3a96f0" />
            </svg>
            21°C
          </Weather>
          <TaskIcon type="button" $width={34} aria-label="Hidden icons">
            <svg width="20" height="11" viewBox="0 0 20 11" fill="none" stroke="#fff" strokeWidth="1.5" aria-hidden="true">
              <path d="M1 10l9-9 9 9" />
            </svg>
          </TaskIcon>
          <TaskIcon type="button" $width={36} aria-label="Battery">
            <svg width="25" height="18" viewBox="0 0 25 18" fill="none" stroke="#fff" strokeWidth="1.5" aria-hidden="true">
              <path d="M9 5h13v11H5v-5M22 8h2v5h-2" />
              <path d="M9 7h11v7H8z" fill="#fff" />
              <path d="M2 0v4M6 0v4M1 4h6v3q-3 4-6 0zM4 9v5" />
            </svg>
          </TaskIcon>
          <TaskIcon type="button" $width={38} aria-label="Network">
            <svg width="20" height="20" viewBox="0 0 20 20" fill="none" stroke="#fff" strokeWidth="1.5" aria-hidden="true">
              <path d="M1 19Q2 3 18 1M5 19Q6 7 18 6M9 19q1-7 9-8M13 19q0-3 5-3" />
              <circle cx="17" cy="18" r="1.5" fill="#fff" />
            </svg>
          </TaskIcon>
          <TaskIcon type="button" $width={36} aria-label="Volume">
            <svg width="23" height="18" viewBox="0 0 23 18" fill="none" stroke="#fff" strokeWidth="1.5" aria-hidden="true">
              <path d="M1 6h3l5-5v16l-5-5H1zM12 6q2 3 0 6M15 3q4 6 0 12M18 1q6 8 0 16" />
            </svg>
          </TaskIcon>
          <TaskIcon type="button" $width={50}>فا</TaskIcon>
          <Clock>
            <time>3:19 PM</time>
            <time>11/4/2021</time>
          </Clock>
          <NoticeButton type="button" $width={72} aria-label="Notifications">
            <svg width="24" height="24" viewBox="0 0 24 24" aria-hidden="true">
              <path d="M0 0h24v18H14l-5 6v-6H0z" fill="#fff" />
              <path d="M5 5h14M5 9h14M5 13h14" stroke="#000b1a" strokeWidth="1.5" />
            </svg>
            <NoticeCount>1</NoticeCount>
          </NoticeButton>
          <ShowDesktop type="button" aria-label="Show desktop" />
        </TaskBar>
      </Window>
    </>
  );
};

export default App;
